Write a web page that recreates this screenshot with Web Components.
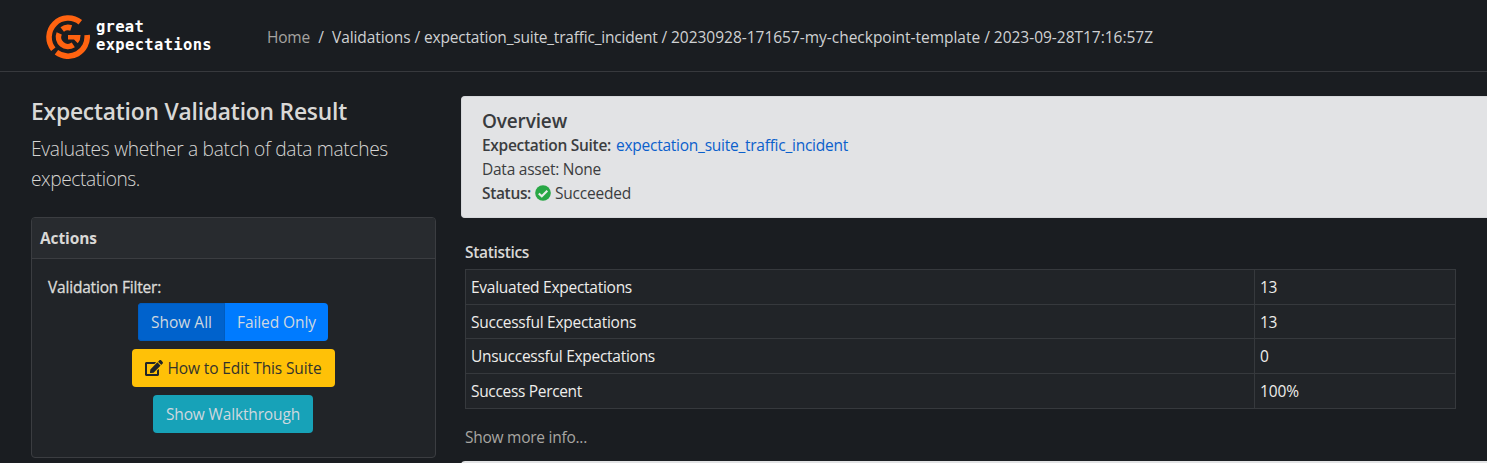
<!DOCTYPE html>
<html lang="en">
<head>
<meta charset="utf-8">
<title>Great Expectations - Validation Result</title>
<style>
html{height:100%;overflow:hidden}
body{margin:0;height:463px;overflow:hidden;background:#1a1d21;color:#d6d5d3;font:15.5px/24px "Open Sans","Noto Sans",sans-serif}
</style>
</head>
<body>
<ge-page></ge-page>
<script>
// One line of text, tracked so that it fills the given width.
class FitText extends HTMLElement{
  connectedCallback(){
    if(this.shadowRoot)return;
    this.attachShadow({mode:'open'}).innerHTML='<style>:host{display:inline-block;white-space:nowrap;width:var(--w)}span{display:inline-block;font-variant-ligatures:none}</style><span><slot></slot></span>';
    const w=+this.getAttribute('w'),s=this.shadowRoot.querySelector('span');
    this.style.setProperty('--w',w+'px');
    const n=this.textContent.length;
    s.style.letterSpacing=((w-s.getBoundingClientRect().width)/n).toFixed(3)+'px';
  }
}
customElements.define('fit-text',FitText);

const define=(name,html)=>{
  const t=document.createElement('template');t.innerHTML=html;
  customElements.define(name,class extends HTMLElement{
    constructor(){super();this.attachShadow({mode:'open'}).append(t.content.cloneNode(true));}
  });
};

define('ge-logo',`<style>
:host{display:flex;align-items:center;gap:6px;color:#fff;font:bold 15.5px/18px "DejaVu Sans Mono",monospace}
svg{display:block;flex:none}.t{display:flex;flex-direction:column;position:relative;top:-1px}
</style>
<svg width="44" height="44" viewBox="0 0 44 44" fill="none" stroke="#ff6310" stroke-width="5.6">
<path d="M34.3 7.3A19.2 19.2 0 0 0 7.3 34.3M10.4 37.3A19.2 19.2 0 0 0 41.1 20"/>
<path d="M13.2 18.4A9.5 9.5 0 0 0 27.3 29.9M16.2 14.5A9.5 9.5 0 0 1 25.2 13"/>
<path fill="#ff6310" stroke="none" d="M22 19.9H34.6Q34.6 25 31.8 28.3L28 24.4H22Z"/></svg>
<div class="t"><fit-text w="48">great</fit-text><fit-text w="116">expectations</fit-text></div>`);

define('ge-header',`<style>
:host{display:flex;align-items:center;height:71px;box-sizing:content-box;border-bottom:1px solid #37393d;padding-left:46px}
ge-logo{width:221px;margin-top:3px}
nav{display:flex;height:24px;margin-top:3px;color:#cfd1d3}
.crumbs{display:flex;gap:4px}
.home{color:#a5a3a0}.sep{width:22px;text-align:center}
</style><ge-logo></ge-logo>
<nav><fit-text class="home" w="43">Home</fit-text><span class="sep">/</span><div class="crumbs"><fit-text w="88">Validations /</fit-text><fit-text w="243">expectation_suite_traffic_incident /</fit-text><fit-text w="482">20230928-171657-my-checkpoint-template / 2023-09-28T17:16:57Z</fit-text></div></nav>`);

define('ge-button',`<style>
:host{display:flex;align-items:center;justify-content:center;gap:5px;box-sizing:border-box;height:38px;border-radius:4px;color:#cfd8df}
</style><slot></slot>`);

define('ge-actions',`<style>
:host{display:block;box-sizing:border-box;width:405px;height:241px;background:#212428;border:1px solid #3b3d41;border-radius:4px;overflow:hidden}
header{height:40px;background:#282b2f;border-bottom:1px solid #3b3d41;padding-left:8px;font-weight:700;line-height:41px;color:#d9d8d6}
.label{padding:16px 16px 0;height:28px;color:#dcdbd9;-webkit-text-stroke:.3px #dcdbd9}
.stack{display:flex;flex-direction:column;align-items:center;gap:8px;margin-left:-1px}
.group{display:flex}
.all{width:87px;background:#0062cc;border-radius:4px 0 0 4px;box-shadow:inset 0 0 0 1px #005cbf}
.failed{width:103px;background:#007bff;border-radius:0 4px 4px 0}
.edit{width:203px;background:#ffc107;color:#33332c}
.walk{width:160px;background:#17a2b8}
</style>
<header><fit-text w="57">Actions</fit-text></header>
<div class="label"><fit-text w="113">Validation Filter:</fit-text></div>
<div class="stack">
<div class="group"><ge-button class="all"><fit-text w="61">Show All</fit-text></ge-button><ge-button class="failed"><fit-text w="79">Failed Only</fit-text></ge-button></div>
<ge-button class="edit"><svg width="18" height="16" viewBox="0 0 576 512" fill="#212529"><path d="M402.6 83.2l90.2 90.2c3.8 3.800 3.800 10 0 13.800L274.400 405.600l-92.800 10.300c-12.400 1.400-22.900-9.100-21.500-21.500l10.300-92.800L388.800 83.200c3.800-3.800 10-3.800 13.800 0zm162-22.900l-48.800-48.800c-15.200-15.200-39.900-15.200-55.200 0l-35.400 35.400c-3.800 3.800-3.800 10 0 13.800l90.200 90.200c3.800 3.800 10 3.800 13.800 0l35.400-35.400c15.200-15.300 15.200-40 0-55.200zM384 346.200V448H64V128h229.800c3.200 0 6.200-1.300 8.500-3.500l40-40c7.600-7.600 2.200-20.500-8.500-20.500H48C21.500 64 0 85.500 0 112v352c0 26.500 21.500 48 48 48h352c26.500 0 48-21.500 48-48V306.200c0-10.700-12.900-16-20.500-8.500l-40 40c-2.200 2.300-3.500 5.300-3.500 8.500z"/></svg><fit-text w="154">How to Edit This Suite</fit-text></ge-button>
<ge-button class="walk"><fit-text w="134">Show Walkthrough</fit-text></ge-button>
</div>`);

define('ge-sidebar',`<style>
:host{display:flex;flex-direction:column;width:405px}
h1{margin:0 0 8px;height:30px;font-size:22.800px;line-height:31px;font-weight:600;color:#d9d8d6}
.lead{height:83px;font-size:19.200px;line-height:30px;font-weight:300;display:flex;flex-direction:column;color:#d6d5d3}
</style>
<h1><fit-text w="316">Expectation Validation Result</fit-text></h1>
<div class="lead"><fit-text w="357">Evaluates whether a batch of data matches</fit-text><fit-text w="109">expectations.</fit-text></div>
<ge-actions></ge-actions>`);

define('ge-overview',`<style>
:host{display:block;box-sizing:border-box;height:122px;background:#e2e3e5;border:1px solid #d6d8db;border-right:0;border-radius:4px 0 0 4px;padding:12px 20px 0;color:#3b3d40}
h2{margin:0;height:24px;font-size:19px;line-height:25px;font-weight:600;color:#393b3e}
.row{display:flex;height:24px}b{font-weight:600}
.link{color:#0b60cc;margin-left:5px}svg{margin:4px 4px 0 4px}
</style>
<h2><fit-text w="85">Overview</fit-text></h2>
<div class="row"><b><fit-text w="129">Expectation Suite:</fit-text></b><fit-text class="link" w="232">expectation_suite_traffic_incident</fit-text></div>
<div class="row"><fit-text w="119">Data asset: None</fit-text></div>
<div class="row"><b><fit-text w="49">Status:</fit-text></b><svg width="16" height="16" viewBox="0 0 16 16"><circle cx="8" cy="8" r="7.800" fill="#28a745"/><path d="M3.800 8.400L6.800 11.300L12.300 5.800" fill="none" stroke="#e8ece9" stroke-width="2.100"/></svg><fit-text w="76">Succeeded</fit-text></div>`);

define('ge-statistics',`<style>
:host{display:block;padding-left:4px}
h3{margin:0;height:29px;font-size:15.500px;line-height:24px;font-weight:600;color:#d9d8d6}
.grid{display:grid;box-sizing:border-box;width:991px;height:140px;grid-template-columns:788px 200px;grid-template-rows:34px 33px 34px 34px;gap:1px;padding:1px;background:#36393d;color:#eeedeb}
.grid div{background:#212428;padding:5px 0 0 5px;box-sizing:border-box}
.more{margin-top:16px;color:#a8a6a2}
</style>
<h3><fit-text w="64">Statistics</fit-text></h3>
<div class="grid">
<div><fit-text w="161">Evaluated Expectations</fit-text></div><div><fit-text w="17">13</fit-text></div>
<div><fit-text w="165">Successful Expectations</fit-text></div><div><fit-text w="17">13</fit-text></div>
<div><fit-text w="184">Unsuccessful Expectations</fit-text></div><div><fit-text w="9">0</fit-text></div>
<div><fit-text w="111">Success Percent</fit-text></div><div><fit-text w="39">100%</fit-text></div>
</div>
<div class="more"><fit-text w="122">Show more info...</fit-text></div>`);

define('ge-page',`<style>
:host{display:block;height:463px;overflow:hidden}
main{display:flex;gap:25px;padding:24px 0 0 31px}
.content{flex:1;min-width:0;display:flex;flex-direction:column}
ge-statistics{margin-top:22px}
.next{height:30px;margin-top:12px;background:#e2e3e5;border-radius:4px 0 0 0}
</style>
<ge-header></ge-header>
<main><ge-sidebar></ge-sidebar><div class="content"><ge-overview></ge-overview><ge-statistics></ge-statistics><div class="next"></div></div></main>`);
</script>
</body>
</html>
